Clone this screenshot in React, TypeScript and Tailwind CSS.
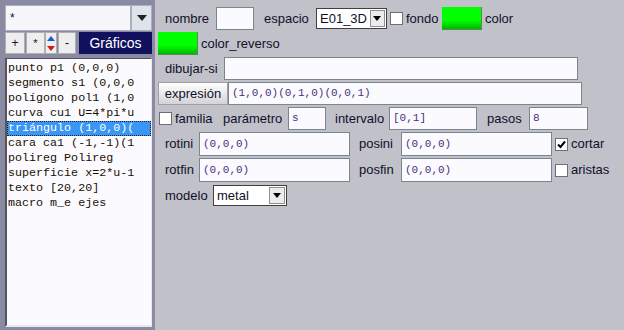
const items = [
  'punto p1 (0,0,0)',
  'segmento s1 (0,0,0',
  'polígono pol1 (1,0',
  'curva cu1 U=4*pi*u',
  'triángulo (1,0,0)(',
  'cara ca1 (-1,-1)(1',
  'polireg Polireg',
  'superficie x=2*u-1',
  'texto [20,20]',
  'macro m_e ejes',
]

function Field({ w, value = '', h = 'h-[23px]' }: { w: string; value?: string; h?: string }) {
  return (
    <div
      className={`${w} ${h} bg-[#fbfbff] border border-[#7a8590] flex items-center px-[3px] font-['Liberation_Mono',monospace] text-[11px] text-[#4a2f7a] overflow-hidden whitespace-nowrap`}
    >
      {value}
    </div>
  )
}

function Check({ checked = false }: { checked?: boolean }) {
  return (
    <div className="w-[13px] h-[13px] bg-white border border-[#6a7078] flex items-center justify-center">
      {checked && (
        <svg width="9" height="9" viewBox="0 0 9 9">
          <path d="M1 4.5 L3.5 7 L8 1.5" stroke="#000" strokeWidth="2" fill="none" />
        </svg>
      )}
    </div>
  )
}

function Swatch() {
  return <div className="w-[40px] h-[23px] bg-gradient-to-b from-[#00ff00] from-60% to-[#00b800] border-b border-r border-[#5a8a5a]" />
}

function Select({ w, value }: { w: string; value: string }) {
  return (
    <div className={`${w} h-[21px] bg-white border border-[#404040] flex items-center`}>
      <span className="flex-1 px-[3px] text-[13px]">{value}</span>
      <div className="w-[16px] h-[17px] mr-[1px] bg-[#ececec] border border-[#909090] flex items-center justify-center">
        <svg width="8" height="5" viewBox="0 0 8 5"><path d="M0 0 H8 L4 5 Z" fill="#000" /></svg>
      </div>
    </div>
  )
}

export default function App() {
  return (
    <div className="w-[624px] h-[330px] flex bg-[#c0c1c9] font-['Liberation_Sans',Arial,sans-serif] text-[13px] text-[#10102a] overflow-hidden">
      <div className="w-[155px] shrink-0 bg-[#8a8aa2] flex flex-col pl-[5px] pt-[5px] pb-[3px] pr-[3px]">
        <div className="flex h-[26px]">
          <div className="flex-1 bg-[#f6f6fb] border border-[#a8b0c0] flex items-center px-[4px] text-[12px]">*</div>
          <div className="w-[21px] bg-[#dfe3ea] border border-[#a8b0c0] flex items-center justify-center">
            <svg width="10" height="6" viewBox="0 0 10 6"><path d="M0 0 H10 L5 6 Z" fill="#222" /></svg>
          </div>
        </div>
        <div className="flex h-[22px] mt-[1px] items-stretch">
          <div className="w-[20px] bg-[#eeeeee] border border-[#b0b0b0] flex items-center justify-center text-[12px]">+</div>
          <div className="w-[19px] ml-[1px] bg-[#eeeeee] border border-[#b0b0b0] flex items-center justify-center text-[11px]">*</div>
          <div className="w-[12px] flex flex-col bg-[#eeeeee] border border-[#b0b0b0]">
            <div className="flex-1 flex items-center justify-center"><svg width="8" height="5" viewBox="0 0 8 5"><path d="M0 5 H8 L4 0 Z" fill="#1a5ad0" /></svg></div>
            <div className="flex-1 flex items-center justify-center"><svg width="8" height="5" viewBox="0 0 8 5"><path d="M0 0 H8 L4 5 Z" fill="#d01a1a" /></svg></div>
          </div>
          <div className="w-[18px] ml-[1px] bg-[#eeeeee] border border-[#b0b0b0] flex items-center justify-center text-[12px]">-</div>
          <div className="flex-1 ml-[3px] bg-[#10105e] text-white text-[14px] flex items-center justify-center">Gráficos</div>
        </div>
        <div className="flex-1 mt-[4px] bg-[#fbfbff] border-l-2 border-t border-[#555560] border-r border-b-2 border-r-[#e8e8ee] border-b-[#e8e8ee] overflow-hidden pt-[2px]">
          {items.map((t, i) => (
            <div
              key={t}
              className={`h-[15px] leading-[15px] pl-[1px] whitespace-nowrap font-['Liberation_Mono',monospace] text-[11.7px] ${i === 4 ? 'bg-[#3a96f5] text-white outline outline-1 outline-dotted outline-[#222] -outline-offset-1' : 'text-[#1a1000]'}`}
            >
              {t}
            </div>
          ))}
        </div>
      </div>

      <div className="flex-1 flex flex-col pl-[3px] pt-[7px] gap-[2px]">
        <div className="flex items-center h-[23px]">
          <span className="ml-[7px] w-[51px]">nombre</span>
          <Field w="w-[38px]" />
          <span className="ml-[10px] w-[52px]">espacio</span>
          <Select w="w-[71px]" value="E01_3D" />
          <div className="ml-[3px]"><Check /></div>
          <span className="ml-[3px] w-[36px]">fondo</span>
          <Swatch />
          <span className="ml-[3px]">color</span>
        </div>
        <div className="flex items-center h-[23px]">
          <Swatch />
          <span className="ml-[3px]">color_reverso</span>
        </div>
        <div className="flex items-center h-[23px]">
          <span className="ml-[7px] w-[59px]">dibujar-si</span>
          <Field w="w-[354px]" />
        </div>
        <div className="flex items-center h-[23px]">
          <div className="w-[70px] h-[23px] bg-gradient-to-b from-[#ffffff] to-[#d4d4d8] border border-[#a0a0a8] flex items-center justify-center">expresión</div>
          <Field w="w-[354px]" value="(1,0,0)(0,1,0)(0,0,1)" />
        </div>
        <div className="flex items-center h-[23px]">
          <div className="ml-[1px]"><Check /></div>
          <span className="ml-[3px] w-[48px]">familia</span>
          <span className="w-[65px]">parámetro</span>
          <Field w="w-[38px]" value="s" />
          <span className="ml-[9px] w-[54px]">intervalo</span>
          <Field w="w-[88px]" value="[0,1]" />
          <span className="ml-[10px] w-[42px]">pasos</span>
          <Field w="w-[59px]" value="8" />
        </div>
        <div className="flex items-center h-[24px]">
          <span className="ml-[7px] w-[34px]">rotini</span>
          <Field w="w-[151px]" value="(0,0,0)" h="h-[24px]" />
          <span className="ml-[9px] w-[42px]">posini</span>
          <Field w="w-[151px]" value="(0,0,0)" h="h-[24px]" />
          <div className="ml-[3px]"><Check checked /></div>
          <span className="ml-[3px]">cortar</span>
        </div>
        <div className="flex items-center h-[24px]">
          <span className="ml-[7px] w-[34px]">rotfin</span>
          <Field w="w-[151px]" value="(0,0,0)" h="h-[24px]" />
          <span className="ml-[9px] w-[42px]">posfin</span>
          <Field w="w-[151px]" value="(0,0,0)" h="h-[24px]" />
          <div className="ml-[3px]"><Check /></div>
          <span className="ml-[3px]">aristas</span>
        </div>
        <div className="flex items-center h-[23px]">
          <span className="ml-[7px] w-[48px]">modelo</span>
          <Select w="w-[74px]" value="metal" />
        </div>
      </div>
    </div>
  )
}
